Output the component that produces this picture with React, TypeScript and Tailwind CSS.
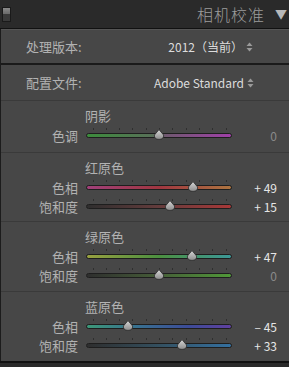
import React from "react";

const FONT = { fontFamily: '"Noto Sans CJK SC", "Noto Sans", sans-serif' };

interface SliderProps {
    label: string;
    value: number;
    gradient: string;
}

const UpDown = () => (
    <svg width="7" height="10" viewBox="0 0 7 10" className="shrink-0">
        <path d="M3.5 0.5 L6.5 4 L0.5 4 Z" fill="#9a9a9a" />
        <path d="M3.5 9.5 L6.5 6 L0.5 6 Z" fill="#9a9a9a" />
    </svg>
);

const Thumb = () => (
    <svg width="12" height="11" viewBox="0 0 12 11">
        <defs>
            <linearGradient id="thumbFill" x1="0" y1="0" x2="0" y2="1">
                <stop offset="0" stopColor="#d6d6d6" />
                <stop offset="1" stopColor="#8c8c8c" />
            </linearGradient>
        </defs>
        <path
            d="M6 0.6 L10.6 6 Q11 10.4 6 10.4 Q1 10.4 1.4 6 Z"
            fill="url(#thumbFill)"
            stroke="#2a2a2a"
            strokeWidth="0.8"
        />
    </svg>
);

const Slider: React.FC<SliderProps> = ({ label, value, gradient }) => {
    const ticks = Array.from({ length: 11 }, (_, i) => 6.5 + i * 13.3);
    const text = value === 0 ? "0" : value > 0 ? `+ ${value}` : `– ${-value}`;
    return (
        <div className="flex items-center h-[19px]">
            <div className="w-[77px] text-right text-[13px] text-[#b2b2b2] leading-none">{label}</div>
            <div className="relative ml-[8px] w-[146px] h-[5px]">
                {ticks.map((x, i) => (
                    <div
                        key={i}
                        className="absolute -top-[5px] w-px h-[2px] bg-[#2f2f2f]"
                        style={{ left: x }}
                    />
                ))}
                <div
                    className="w-full h-full rounded-full border border-[#1e1e1e]"
                    style={{ background: gradient }}
                />
                <div
                    className="absolute -top-[4px] -translate-x-1/2"
                    style={{ left: 73 + value * 0.7 }}
                >
                    <Thumb />
                </div>
            </div>
            <div
                className={`w-[45px] text-right text-[12px] leading-none ${
                    value === 0 ? "text-[#8a8a8a]" : "text-[#e6e6e6]"
                }`}
            >
                {text}
            </div>
        </div>
    );
};

interface GroupProps {
    title: string;
    height: string;
    children: React.ReactNode;
}

const Group: React.FC<GroupProps> = ({ title, height, children }) => (
    <div className={`flex flex-col pt-[5px] ${height}`}>
        <div className="pl-[84px] h-[20px] flex items-center text-[13px] text-[#b2b2b2]">{title}</div>
        {children}
    </div>
);

export default function App() {
    return (
        <div className="w-[289px] h-[367px] bg-[#2a2a2a] flex flex-col overflow-hidden" style={FONT}>
            {/* Header */}
            <div className="h-[28px] flex items-center shrink-0">
                <div className="ml-[2px] w-[9px] h-[15px] border border-[#1a1a1a] flex flex-col">
                    <div className="h-1/2 bg-gradient-to-b from-[#8a8a8a] to-[#6a6a6a]" />
                    <div className="h-1/2 bg-[#3a3a3a]" />
                </div>
                <div className="ml-auto text-[16px] font-light text-[#9c9c9c] tracking-[1px] leading-none">相机校准</div>
                <div className="ml-[10px] mr-[2px] text-[12px] text-[#b8b8b8] leading-none">▼</div>
            </div>
            <div className="h-px bg-[#111111] shrink-0" />

            {/* Panel */}
            <div className="flex-1 bg-[#474747] border-l border-[#1c1c1c] flex flex-col">
                <div className="h-[34px] flex items-center pl-[25px] pr-[36px] text-[13px] text-[#b2b2b2] border-t border-[#555555]">
                    <span>处理版本:</span>
                    <span className="ml-auto text-[12px] text-[#dcdcdc] mr-[3px]">2012（当前）</span>
                    <UpDown />
                </div>
                <div className="h-[2px] bg-[#1a1a1a]" />
                <div className="h-[35px] flex items-center pl-[25px] pr-[35px] text-[13px] text-[#b2b2b2]">
                    <span>配置文件:</span>
                    <span className="ml-auto text-[12px] text-[#dcdcdc] mr-[3px]">Adobe Standard</span>
                    <UpDown />
                </div>
                <div className="h-px bg-[#3a3a3a]" />

                <Group title="阴影" height="h-[51px]">
                    <Slider label="色调" value={0} gradient="linear-gradient(to right, #3c8c3c, #587058 45%, #705870 55%, #a040a8)" />
                </Group>
                <div className="h-px bg-[#3a3a3a]" />

                <Group title="红原色" height="h-[68px]">
                    <Slider label="色相" value={49} gradient="linear-gradient(to right, #a0407a, #a03640 50%, #ac7440)" />
                    <Slider label="饱和度" value={15} gradient="linear-gradient(to right, #2e2e2e, #643c3c 50%, #a83838)" />
                </Group>
                <div className="h-px bg-[#3a3a3a]" />

                <Group title="绿原色" height="h-[69px]">
                    <Slider label="色相" value={47} gradient="linear-gradient(to right, #98a040, #4c9040 50%, #3c9898)" />
                    <Slider label="饱和度" value={0} gradient="linear-gradient(to right, #2e2e2e, #465e38 50%, #509838)" />
                </Group>
                <div className="h-px bg-[#3a3a3a]" />

                <Group title="蓝原色" height="h-[68px]">
                    <Slider label="色相" value={-45} gradient="linear-gradient(to right, #3c9878, #387090 35%, #3c4c98 70%, #6040a0)" />
                    <Slider label="饱和度" value={33} gradient="linear-gradient(to right, #2e2e2e, #345060 50%, #3470a0)" />
                </Group>
            </div>
            <div className="h-[2px] bg-[#111111] shrink-0" />
            <div className="h-[4px] bg-[#2a2a2a] shrink-0" />
        </div>
    );
}
